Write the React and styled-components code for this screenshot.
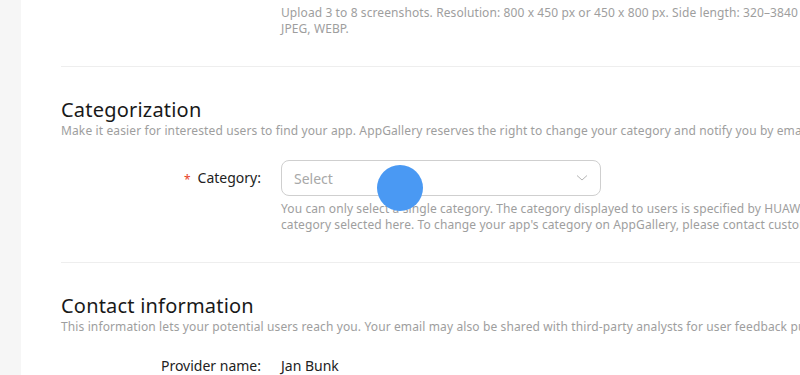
import React from "react";
import styled, { createGlobalStyle } from "styled-components";

const Global = createGlobalStyle`
  html, body { margin: 0; padding: 0; background: #fff; overflow: hidden; }
  body { font-family: "Noto Sans", "Open Sans", sans-serif; }
`;

const Page = styled.div`
  display: flex;
  width: 800px;
  height: 375px;
  overflow: hidden;
`;

const Sidebar = styled.div`
  width: 21px;
  flex: none;
  background: #f6f6f6;
`;

const Main = styled.div`
  flex: 1;
  background: #fff;
  padding: 5px 0 0 40px;
  min-width: 0;
  overflow: hidden;
  white-space: nowrap;
`;

const Row = styled.div`
  display: grid;
  grid-template-columns: 200px 1fr;
  column-gap: 20px;
  align-items: ${(p) => (p.$center ? "center" : "start")};
  margin-top: ${(p) => p.$mt || 0}px;
`;

const Label = styled.div`
  text-align: right;
  font-size: 14px;
  line-height: 20px;
  color: #222;
`;

const Star = styled.span`
  color: #e84026;
  font-size: 12px;
  margin-right: 7px;
  position: relative;
  top: 1px;
`;

const Hint = styled.div`
  font-size: 12px;
  line-height: 16px;
  letter-spacing: 0.1px;
  color: #9e9e9e;
  margin-top: ${(p) => p.$mt || 0}px;
  grid-column: 2;
`;

const Divider = styled.div`
  height: 1px;
  background: #eeeeee;
  margin-top: 29px;
`;

const Heading = styled.h2`
  margin: 29px 0 0;
  font-size: 20px;
  line-height: 27px;
  letter-spacing: 0.2px;
  font-weight: 400;
  color: #191919;
`;

const Desc = styled.div`
  font-size: 12px;
  line-height: 16px;
  letter-spacing: 0.12px;
  color: #9e9e9e;
`;

const Select = styled.div`
  width: 320px;
  height: 36px;
  box-sizing: border-box;
  border: 1px solid #cfcfcf;
  border-radius: 8px;
  display: flex;
  align-items: center;
  justify-content: space-between;
  padding: 0 12px 0 12px;
`;

const Placeholder = styled.span`
  font-size: 14px;
  color: #a8a8a8;
`;

const Value = styled.div`
  font-size: 14px;
  line-height: 20px;
  color: #222;
`;

const Field = styled.div`
  position: relative;
`;

const Touch = styled.div`
  position: absolute;
  left: 96px;
  top: 5px;
  width: 46px;
  height: 46px;
  border-radius: 50%;
  background: #4a99f3;
`;

export default function App() {
  return (
    <>
      <Global />
      <Page>
        <Sidebar />
        <Main>
          <Row>
            <Hint>
              Upload 3 to 8 screenshots. Resolution: 800 x 450 px or 450 x 800 px. Side length: 320–3840 px.
              <br />
              JPEG, WEBP.
            </Hint>
          </Row>
          <Divider />

          <Heading>Categorization</Heading>
          <Desc>
            Make it easier for interested users to find your app. AppGallery reserves the right to change your category and notify you by email.
          </Desc>
          <Row $center $mt={21}>
            <Label>
              <Star>*</Star>Category:
            </Label>
            <Field>
              <Select>
                <Placeholder>Select</Placeholder>
                <svg width="12" height="8" viewBox="0 0 12 8">
                  <polyline points="1,1.5 6,6 11,1.5" fill="none" stroke="#b5b5b5" strokeWidth="1" />
                </svg>
              </Select>
              <Touch />
            </Field>
          </Row>
          <Row>
            <Hint $mt={5}>
              You can only select a single category. The category displayed to users is specified by HUAWEI AppGallery based on the
              <br />
              category selected here. To change your app's category on AppGallery, please contact customer service.
            </Hint>
          </Row>
          <Divider />

          <Heading>Contact information</Heading>
          <Desc>
            This information lets your potential users reach you. Your email may also be shared with third-party analysts for user feedback purposes.
          </Desc>
          <Row $center $mt={21}>
            <Label>Provider name:</Label>
            <Value>Jan Bunk</Value>
          </Row>
        </Main>
      </Page>
    </>
  );
}
